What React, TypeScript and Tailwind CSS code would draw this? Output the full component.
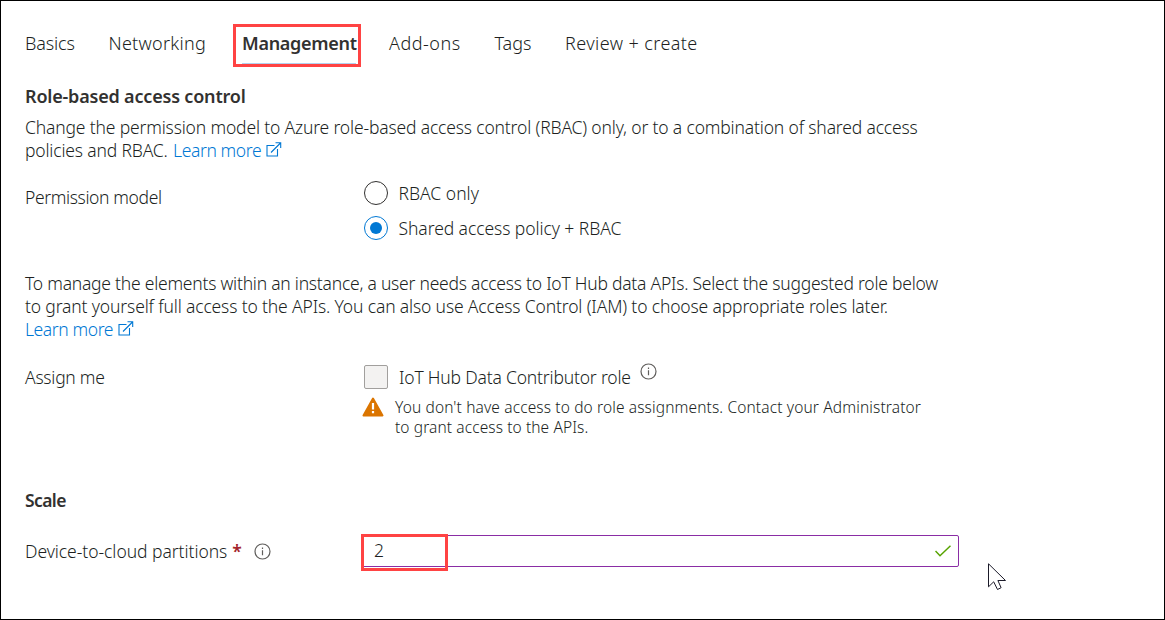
import type { ReactNode } from "react";

function ExternalLinkIcon() {
  return (
    <svg className="ml-[5px] h-[15px] w-4 shrink-0 -translate-y-px" viewBox="0 0 16 15" fill="none" stroke="#0078d4" strokeWidth="1.1">
      <path d="M8.5 3.5H1v10.5h10.5V7" />
      <path d="M5 10.5 14.5 1M9.5 .8h5.2v5.2" />
    </svg>
  );
}

function InfoIcon() {
  return (
    <svg className="block size-[17px]" viewBox="0 0 17 17" fill="none" stroke="#605e5c">
      <circle cx="8.5" cy="8.5" r="7.5" strokeWidth="1.2" />
      <path d="M8.5 7.3v5M8.5 4.6v1.3" strokeWidth="1.2" />
    </svg>
  );
}

function LearnMore() {
  return (
    <a className="inline-flex items-center tracking-[-0.4px] text-[#0078d4]">
      Learn more
      <ExternalLinkIcon />
    </a>
  );
}

function Tab({ children, className }: { children: ReactNode; className: string }) {
  return <div className={`shrink-0 whitespace-nowrap ${className}`}>{children}</div>;
}

function Radio({ checked }: { checked?: boolean }) {
  return (
    <span
      className={`flex size-6 shrink-0 items-center justify-center rounded-full border ${
        checked ? "border-[#0078d4]" : "border-[#323130]"
      }`}
    >
      {checked && <span className="size-3 rounded-full bg-[#0078d4]" />}
    </span>
  );
}

export default function App() {
  return (
    <div className="relative h-[620px] w-[1165px] overflow-hidden border border-black bg-white pl-6 font-['Noto_Sans',sans-serif] text-[17.5px] leading-[23px] font-light text-[#201f1e]">
      <nav className="flex pt-[31px] text-[18px]">
        <Tab className="w-[83.5px] tracking-[-0.15px]">Basics</Tab>
        <Tab className="w-[133.5px] tracking-[0.28px]">Networking</Tab>
        <Tab className="relative w-[147px]">
          <span className="font-semibold tracking-[-0.3px] text-[#323130]">Management</span>
          <span className="absolute top-[31px] left-0 h-px w-[114px] bg-[#b3d1ee]" />
          <span className="absolute -top-2 -left-[9px] h-[43px] w-32 border-3 border-[#ff4343]" />
        </Tab>
        <Tab className="w-[105.5px] tracking-[0.5px]">Add-ons</Tab>
        <Tab className="w-[70.5px]">Tags</Tab>
        <Tab className="w-[140px] tracking-[0.42px]">Review + create</Tab>
      </nav>

      <h2 className="mt-[30px] text-[18px] font-semibold tracking-[-0.19px] text-[#323130]">Role-based access control</h2>
      <div className="mt-2 whitespace-nowrap">
        <p className="tracking-[-0.162px]">
          Change the permission model to Azure role-based access control (RBAC) only, or to a combination of shared access
        </p>
        <p className="flex tracking-[-0.17px]">
          <span className="mr-[5.5px]">policies and RBAC.</span>
          <LearnMore />
        </p>
      </div>

      <div className="mt-[19px] flex">
        <div className="mt-[5px] w-[338.5px] tracking-[-0.37px]">Permission model</div>
        <div className="flex flex-col gap-[11px]">
          <label className="flex h-6 items-center gap-[11px]">
            <Radio />
            <span>RBAC only</span>
          </label>
          <label className="flex h-6 items-center gap-[11px]">
            <Radio checked />
            <span className="tracking-[-0.07px]">Shared access policy + RBAC</span>
          </label>
        </div>
      </div>

      <div className="mt-8 whitespace-nowrap">
        <p className="tracking-[-0.237px]">
          To manage the elements within an instance, a user needs access to IoT Hub data APIs. Select the suggested role below
        </p>
        <p className="tracking-[-0.15px]">
          to grant yourself full access to the APIs. You can also use Access Control (IAM) to choose appropriate roles later.
        </p>
        <p className="flex">
          <LearnMore />
        </p>
      </div>

      <div className="mt-6 flex">
        <div className="mt-px w-[336px] tracking-[-0.25px]">Assign me</div>
        <div>
          <div className="flex h-6 items-center pl-[3px]">
            <span className="mr-[11px] size-6 rounded-[2px] border border-[#a19f9d] bg-[#f3f2f1]" />
            <span className="tracking-[-0.19px]">IoT Hub Data Contributor role</span>
            <span className="mb-3 ml-[9px]">
              <InfoIcon />
            </span>
          </div>
          <div className="mt-2 flex">
            <svg className="mr-[11px] ml-px h-[20px] w-[22px]" viewBox="0 0 22 20">
              <path d="M11 1.5 20.5 18.5H1.5z" fill="#db7500" stroke="#db7500" strokeWidth="2" strokeLinejoin="round" />
              <path d="M11 6v6.5M11 14v2.2" stroke="#fff" strokeWidth="2.2" />
            </svg>
            <div className="text-[15.5px] leading-5 whitespace-nowrap">
              <p className="tracking-[0.13px]">
                You don't have access to do role assignments. Contact your Administrator
              </p>
              <p className="tracking-[0.1px]">to grant access to the APIs.</p>
            </div>
          </div>
        </div>
      </div>

      <h2 className="mt-[52px] font-semibold tracking-[-0.6px] text-[#323130]">Scale</h2>

      <div className="mt-[23px] flex items-start">
        <div className="mt-[5px] flex w-[336px] items-center">
          <span className="tracking-[-0.05px]">Device-to-cloud partitions</span>
          <span className="ml-[5px] font-semibold text-[#a4262c]">*</span>
          <span className="ml-3">
            <InfoIcon />
          </span>
        </div>
        <div className="relative flex h-8 w-[598px] items-center justify-between rounded-[2px] border border-[#8a2da5] pr-[7px] pl-3">
          <span className="-translate-y-px">2</span>
          <svg className="h-3 w-4" viewBox="0 0 16 12" fill="none" stroke="#57a300" strokeWidth="1.5">
            <path d="M.5 6 5 10.8 15.5.7" />
          </svg>
          <span className="absolute -top-0.5 -left-px h-[37px] w-[87px] border-3 border-[#ff4343]" />
        </div>
      </div>

      <svg className="absolute top-[562px] left-[987px] h-[28px] w-[19px]" viewBox="0 0 19 28">
        <path d="M.5.8v23l5.2-5 3.8 7.7 3.6-1.8-3.2-7.2h7.6z" fill="#fff" stroke="#1b1a29" strokeLinejoin="round" />
      </svg>
    </div>
  );
}
